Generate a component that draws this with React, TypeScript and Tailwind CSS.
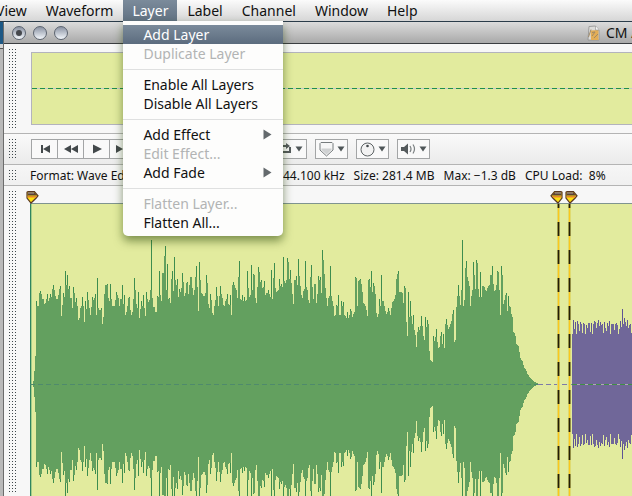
import type { ReactNode } from 'react';

// Peak height of each one-pixel column of the first clip.
const GREEN_PEAKS: number[] = [
  3, 13, 28, 83, 78, 78, 91, 93, 90, 85, 85, 80, 81, 85, 90, 83, 86, 90, 87, 95, 99, 94, 88, 85, 85, 89, 95, 98, 68, 79,
  91, 87, 113, 99, 109, 95, 98, 86, 86, 76, 97, 91, 82, 86, 78, 64, 66, 76, 78, 87, 78, 62, 83, 75, 92, 84, 76, 69, 77, 87,
  84, 86, 90, 69, 106, 76, 74, 74, 76, 60, 67, 90, 99, 99, 100, 86, 83, 100, 85, 78, 78, 78, 84, 92, 89, 86, 78, 85, 85, 99,
  80, 89, 69, 72, 78, 86, 87, 74, 69, 72, 85, 106, 94, 80, 76, 92, 66, 75, 83, 78, 89, 76, 68, 92, 85, 82, 84, 94, 144, 86,
  77, 77, 72, 72, 88, 87, 113, 89, 83, 111, 111, 128, 138, 94, 120, 85, 86, 81, 105, 113, 93, 127, 104, 99, 105, 87, 95, 92, 96, 111,
  102, 88, 91, 101, 102, 90, 99, 107, 107, 96, 89, 94, 107, 118, 97, 73, 122, 104, 91, 90, 88, 88, 91, 109, 101, 80, 76, 90, 84, 71,
  69, 78, 84, 97, 88, 78, 88, 98, 90, 86, 79, 78, 83, 85, 90, 80, 79, 89, 69, 99, 102, 99, 96, 94, 86, 107, 123, 85, 84, 89,
  83, 87, 83, 84, 113, 96, 87, 89, 119, 94, 110, 109, 86, 81, 97, 117, 112, 102, 104, 96, 97, 103, 89, 91, 91, 94, 90, 87, 114, 85,
  106, 121, 96, 92, 93, 94, 105, 98, 100, 97, 127, 103, 101, 104, 126, 122, 105, 114, 101, 90, 80, 104, 104, 108, 99, 125, 108, 98, 89, 86,
  93, 95, 123, 97, 94, 84, 81, 107, 119, 97, 85, 100, 100, 81, 90, 108, 104, 107, 91, 134, 124, 110, 96, 86, 78, 86, 88, 118, 88, 83,
  78, 68, 69, 79, 78, 89, 69, 69, 83, 78, 82, 69, 68, 66, 72, 66, 69, 75, 73, 67, 70, 72, 107, 106, 78, 103, 104, 105, 100, 92,
  81, 80, 78, 74, 68, 104, 105, 97, 113, 92, 101, 98, 90, 71, 67, 70, 85, 78, 109, 83, 83, 78, 73, 70, 72, 76, 73, 69, 76, 82,
  83, 85, 89, 105, 110, 113, 92, 92, 92, 91, 81, 98, 96, 62, 48, 92, 67, 83, 68, 60, 69, 54, 49, 37, 52, 57, 54, 58, 68, 58,
  48, 44, 67, 57, 64, 60, 33, 24, 23, 22, 48, 43, 47, 55, 42, 36, 37, 48, 52, 40, 50, 36, 60, 65, 59, 55, 57, 60, 63, 70,
  74, 42, 44, 77, 88, 99, 88, 79, 94, 144, 78, 84, 116, 123, 107, 103, 98, 78, 88, 94, 122, 109, 95, 124, 121, 95, 87, 112, 87, 98,
  98, 97, 94, 93, 96, 98, 99, 109, 109, 118, 100, 93, 94, 99, 113, 112, 94, 69, 118, 109, 80, 84, 89, 91, 73, 88, 78, 77, 70, 67,
  52, 51, 48, 40, 39, 38, 32, 26, 24, 23, 19, 16, 15, 13, 10, 9, 7, 6, 5, 4, 3, 2, 2, 1, 1,
];

const PURPLE_PEAKS: number[] = [
  50, 64, 55, 62, 50, 63, 60, 53, 62, 60, 51, 61, 60, 50, 59, 56, 61, 61, 52, 61, 50, 60, 63, 62, 56, 61, 64, 58, 62, 59,
  60, 51, 62, 56, 53, 61, 58, 63, 50, 60, 60, 60, 54, 60, 61, 59, 50, 55, 63, 57, 75, 60, 66, 62, 58, 64, 56, 59, 60, 51,
  60, 63, 62, 55, 60, 63, 58, 61, 50, 60,
];

const MID = 180;

function columns(peaks: number[], start: number): string {
  return peaks.map((p, i) => `M${start + i} ${MID - p}h1v${p * 2}h-1z`).join('');
}

function body(peaks: number[]): number[] {
  return peaks.map((p, i) => Math.min(p, Math.max(peaks[i - 1] ?? 0, peaks[i + 1] ?? 0)));
}

function Waveform() {
  return (
    <svg width="1400" height="480" className="block max-w-none" shapeRendering="crispEdges" role="img" aria-label="Audio waveform">
      <rect x="0" y="0" width="1" height="480" fill="#2f8560" />
      <rect x="1" y="0" width="1" height="480" fill="#a5cd88" />
      <path d={columns(GREEN_PEAKS, 3)} fill="#3d8d4f" />
      <path d={columns(body(GREEN_PEAKS), 3)} fill="#63a05f" />
      <path d={columns(PURPLE_PEAKS, 542)} fill="#5e5494" />
      <path d={columns(body(PURPLE_PEAKS), 542)} fill="#706799" />
      <path d="M0 180.5H508" stroke="#4f8a6c" strokeDasharray="5 3" />
      <path d="M508 180.5H542" stroke="#7d7aa8" strokeDasharray="5 3" />
      <path d="M542 180.5H1400" stroke="#b0a6b4" />
      <path d="M542 180.5H1400" stroke="#3f8f45" strokeDasharray="5 3" />
      {[528, 539].map((x) => (
        <g key={x} shapeRendering="geometricPrecision">
          <rect x={x - 1} y="0" width="3" height="480" fill="#d3e394" />
          <path d={`M${x + 0.5} 0V480`} stroke="#fcc81c" strokeWidth="1.6" />
          <path d={`M${x + 0.5} 0V480`} stroke="#221e08" strokeWidth="1.8" strokeDasharray="14 14" strokeDashoffset="10" />
        </g>
      ))}
    </svg>
  );
}

function Marker({ x, left }: { x: number; left?: boolean }) {
  return (
    <g transform={left ? `translate(${x} 5) scale(-1 1)` : `translate(${x} 5)`}>
      <path d="M-4 1.2 -3 .6H3.4L7 4.8 5.2 7 0 12 -4 7Z" fill="#fbe010" stroke="#5a3822" strokeWidth="1.2" />
      <path d="M-3.4 1.2H3L6.2 4.6H-3.4Z" fill="#5f4234" />
      <path d="M-3 2H3" stroke="#aaa39c" />
      <path d="M-3.4 5H6L5 6.4H-3.4Z" fill="#e8862a" />
    </g>
  );
}

function Grip() {
  return <div aria-hidden="true" className="my-[4px] ml-[4px] w-[9px] shrink-0 bg-[radial-gradient(#3f484c_1px,transparent_1px)] bg-size-[3px_3px]" />;
}

function Caret() {
  return (
    <svg width="8" height="6" viewBox="0 0 8 6" aria-hidden="true">
      <path d="M.5.5h7L4 5.5z" fill="#4f5658" />
    </svg>
  );
}

function Tool({ label, children }: { label: string; children: ReactNode }) {
  return (
    <button type="button" aria-label={label} className="flex h-[20px] w-[33px] shrink-0 items-center justify-center gap-[3px] border border-[#a3a5a6] bg-[#f9f9f9]">
      {children}
      <Caret />
    </button>
  );
}

const TRANSPORT: { label: string; d: string }[] = [
  { label: 'Go to start', d: 'M3 3h2v8H3zM12 3v8L5 7z' },
  { label: 'Rewind', d: 'M7 3v8L0 7zM14 3v8L7 7z' },
  { label: 'Play', d: 'M3 2.5v9L12 7z' },
  { label: 'Fast forward', d: 'M0 3v8l7-4zM7 3v8l7-4z' },
  { label: 'Go to end', d: 'M2 3v8l7-4zM9 3h2v8H9z' },
];

type Entry = { label: string; disabled?: boolean; active?: boolean; sub?: boolean };

const GROUPS: Entry[][] = [
  [{ label: 'Add Layer', active: true }, { label: 'Duplicate Layer', disabled: true }],
  [{ label: 'Enable All Layers' }, { label: 'Disable All Layers' }],
  [{ label: 'Add Effect', sub: true }, { label: 'Edit Effect...', disabled: true }, { label: 'Add Fade', sub: true }],
  [{ label: 'Flatten Layer...', disabled: true }, { label: 'Flatten All...' }],
];

function LayerMenu() {
  return (
    <div role="menu" className="absolute top-full left-0 z-10 w-[160px] rounded-b-[5px] bg-[#fdfdfc] py-[4px] shadow-[0_5px_10px_rgba(40,70,10,0.55)]">
      {GROUPS.map((group, i) => (
        <div key={i}>
          {i > 0 && (
            <div role="separator" className="flex h-[12px] items-center">
              <div className="h-px w-full bg-[#dfe0e0]" />
            </div>
          )}
          {group.map((e) => (
            <button
              key={e.label}
              type="button"
              role="menuitem"
              disabled={e.disabled}
              className={`flex h-[19px] w-full items-center justify-between pr-[11px] pl-[20px] text-left whitespace-nowrap ${
                e.active ? 'bg-linear-to-b from-[#7b8b9b] to-[#5c6c7e] text-white' : e.disabled ? 'text-[#b2b4b4]' : 'text-[#111]'
              }`}
            >
              {e.label}
              {e.sub && (
                <svg width="9" height="11" viewBox="0 0 9 11" aria-hidden="true">
                  <path d="M.5.5v10l8-5z" fill="#646a6d" />
                </svg>
              )}
            </button>
          ))}
        </div>
      ))}
    </div>
  );
}

const MENUS = ['View', 'Waveform', 'Layer', 'Label', 'Channel', 'Window', 'Help'];

export default function App() {
  return (
    <div className="flex h-screen flex-col overflow-hidden bg-[#b9b9b9] font-['Noto_Sans',sans-serif] text-[14px] leading-[19px] text-[#111]">
      <nav className="relative z-10 flex h-[22px] shrink-0 border-b border-[#2b3c4a] bg-linear-to-b from-[#fbfbfb] to-[#d6d6d6]">
        <div className="-ml-[13px] flex gap-px">
          {MENUS.map((m) => (
            <div key={m} className="relative">
              <button
                type="button"
                className={`h-[21px] px-[9px] ${m === 'Layer' ? 'bg-linear-to-b from-[#7b8b9b] to-[#627283] text-white' : ''}`}
              >
                {m}
              </button>
              {m === 'Layer' && <LayerMenu />}
            </div>
          ))}
        </div>
      </nav>

      <div className="flex min-h-0 flex-1">
        <div aria-hidden="true" className="w-[4px] shrink-0 border-r border-[#6c6c6c] bg-[#b9b9b9]">
          <div className="h-[22px] bg-[#1d5885]" />
          <div className="h-[5px] border-b border-[#555] bg-[#d5d5d5]" />
        </div>
        <main className="flex min-w-0 flex-1 flex-col bg-[#f7f7f7]">
          <header className="flex h-[22px] shrink-0 items-center rounded-tl-[4px] border-b border-[#3a3d40] bg-linear-to-b from-[#dcdcdc] to-[#a9a9a9] pl-[8px]">
            <div className="flex gap-[7px]">
              {['Close', 'Minimize', 'Zoom'].map((b) => (
                <button
                  key={b}
                  type="button"
                  aria-label={b}
                  className="flex size-[14px] items-center justify-center rounded-full border border-[#5c6470] bg-linear-to-b from-[#8b93a3] to-[#f4f8fc]"
                >
                  {b === 'Close' && <span className="size-[6px] rounded-full bg-[#45484d]" />}
                </button>
              ))}
            </div>
            <div className="ml-auto flex w-[45px] shrink-0 items-center gap-[6px] overflow-hidden whitespace-nowrap">
              <svg width="13" height="16" viewBox="0 0 13 16" className="shrink-0" aria-hidden="true">
                <path d="M2 1.5 8.5 1 12 5v10H1z" fill="#dcdcda" stroke="#8f8f8f" strokeWidth=".8" />
                <path d="M3.5 5.5 11.5 5v10H4z" fill="#e3ad55" />
                <path d="M1.5 12 4 4.5M5 7.5l3-.5-3 4M7 13l4-4" stroke="#a08a68" fill="none" />
                <path d="M8.5 1v4H12" fill="#f5f5f5" stroke="#8f8f8f" strokeWidth=".6" />
              </svg>
              <h1 className="text-[14px]">CM A</h1>
            </div>
          </header>

          <section aria-label="Overview" className="flex h-[90px] shrink-0 border-b border-[#b4b4b4]">
            <Grip />
            <div className="mt-[8px] mb-[8px] ml-[14px] flex min-w-0 flex-1 flex-col justify-center border border-r-0 border-[#b3b3bd] bg-[#e2eb9e]">
              <div className="h-px bg-[#c6c5cf] bg-[repeating-linear-gradient(90deg,#1f8f4c_0_5px,#c6c5cf_5px_8px)]" />
            </div>
          </section>

          <section aria-label="Transport" className="flex h-[31px] shrink-0 border-b border-[#b4b4b4] bg-linear-to-b from-[#fafafa] to-[#ebebeb]">
            <Grip />
            <div className="ml-[14px] flex items-center gap-[8px]">
              <div className="mr-[104px] flex border-l border-[#a3a5a6]">
                {TRANSPORT.map((t) => (
                  <button key={t.label} type="button" aria-label={t.label} className="flex h-[20px] w-[26px] items-center justify-center border-y border-r border-[#a3a5a6] bg-[#f9f9f9]">
                    <svg width="14" height="14" viewBox="0 0 14 14" aria-hidden="true">
                      <path d={t.d} fill="#43494b" />
                    </svg>
                  </button>
                ))}
              </div>
              <Tool label="Loop">
                <svg width="14" height="14" viewBox="0 0 14 14" aria-hidden="true">
                  <path d="M1 8V4H9M12 5v5H4" fill="none" stroke="#555b5d" strokeWidth="2" />
                  <path d="M8 1 12 4 8 7zM5 7 1 10l4 3z" fill="#555b5d" />
                </svg>
              </Tool>
              <Tool label="Add label">
                <svg width="15" height="16" viewBox="0 0 15 16" aria-hidden="true">
                  <path d="M2 1.5h11l1 1V9l-6.5 6L1 9V2.5z" fill="#f7f7f7" stroke="#777c7e" />
                  <path d="M2.5 7.5h10V9l-5 4.5-5-4.5z" fill="#cfd1d2" />
                </svg>
              </Tool>
              <Tool label="Scrub">
                <svg width="15" height="15" viewBox="0 0 15 15" aria-hidden="true">
                  <circle cx="7.5" cy="7.5" r="6.5" fill="#f2f2f2" stroke="#5d6365" />
                  <circle cx="7.5" cy="4" r="1.3" fill="#43494b" />
                </svg>
              </Tool>
              <Tool label="Volume">
                <svg width="15" height="12" viewBox="0 0 15 12" aria-hidden="true">
                  <path d="M0 4h3l4-3.5v11L3 8H0z" fill="#555b5d" />
                  <path d="M9 3q2 3 0 6M12 1.5q3 4.5 0 9" fill="none" stroke="#7b8082" strokeWidth="1.2" />
                </svg>
              </Tool>
            </div>
          </section>

          <section aria-label="File information" className="flex h-[21px] shrink-0 border-b border-[#b4b4b4] bg-linear-to-b from-[#f6f6f6] to-[#f0f0f0]">
            <Grip />
            <div className="ml-[13px] flex items-center gap-[9px] text-[12px] whitespace-nowrap">
              <span className="w-[244px]">Format: Wave Editor</span>
              <span>44.100 kHz</span>
              <span>Size: 281.4 MB</span>
              <span>Max: −1.3 dB</span>
              <span>CPU Load:&nbsp; 8%</span>
            </div>
          </section>

          <section aria-label="Editor" className="flex min-h-0 flex-1">
            <Grip />
            <div className="ml-[13px] flex min-w-0 flex-1 flex-col">
              <div className="relative z-[1] h-[17px] shrink-0">
                <svg width="602" height="18" className="block max-w-none overflow-visible" aria-hidden="true">
                  <Marker x={1} />
                  <Marker x={528} left />
                  <Marker x={540} />
                </svg>
              </div>
              <div className="min-h-0 flex-1 overflow-hidden border-t border-[#7f9490] bg-[#e2eb9e]">
                <Waveform />
              </div>
            </div>
          </section>
        </main>
      </div>
    </div>
  );
}
